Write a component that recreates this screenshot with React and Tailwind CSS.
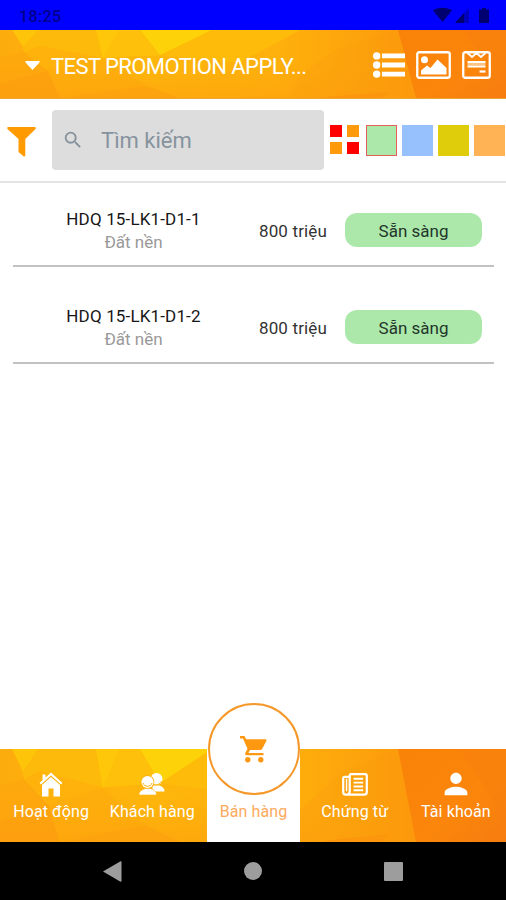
import React, { useState } from 'react';
import { MdSearch, MdPerson } from 'react-icons/md';

const products = [
  { id: 1, name: 'HDQ 15-LK1-D1-1', type: 'Đất nền', price: '800 triệu', status: 'Sẵn sàng' },
  { id: 2, name: 'HDQ 15-LK1-D1-2', type: 'Đất nền', price: '800 triệu', status: 'Sẵn sàng' }
];

const statusColors = [
  { id: 'ready', className: 'bg-[#abe8aa]' },
  { id: 'hold', className: 'bg-[#97c1fd]' },
  { id: 'booked', className: 'bg-[#dfcc0b]' },
  { id: 'deposit', className: 'bg-[#ffb355]' }
];

// Low-poly orange backdrop shared by the header and the tab bar
const PolyBackground = ({ id }) => (
  <svg className="absolute inset-0 h-full w-full" viewBox="0 0 506 92" preserveAspectRatio="none" aria-hidden="true">
    <defs>
      <linearGradient id={`${id}-base`} x1="0" y1="0" x2="1" y2="0">
        <stop offset="0" stopColor="#fdac0d" />
        <stop offset="0.3" stopColor="#feb60b" />
        <stop offset="0.55" stopColor="#feb00c" />
        <stop offset="0.7" stopColor="#fda40c" />
        <stop offset="0.8" stopColor="#fd9a0c" />
        <stop offset="1" stopColor="#fb8a0c" />
      </linearGradient>
      <linearGradient id={`${id}-right`} x1="0" y1="0" x2="1" y2="1">
        <stop offset="0" stopColor="#f98209" />
        <stop offset="0.6" stopColor="#fb860b" />
        <stop offset="1" stopColor="#f67c10" />
      </linearGradient>
      <linearGradient id={`${id}-shade`} x1="0" y1="0" x2="0" y2="1">
        <stop offset="0.5" stopColor="#fd9d0e" stopOpacity="0" />
        <stop offset="1" stopColor="#fd9d0e" stopOpacity="0.5" />
      </linearGradient>
    </defs>
    <rect width="506" height="92" fill={`url(#${id}-base)`} />
    <path d="M18 0H96L102 38L40 22L24 30Z" fill="#feba0b" />
    <path d="M12 0H38L23 22Z" fill="#fec40a" />
    <path d="M96 0H140L160 34L102 38Z" fill="#fec00a" />
    <path d="M96 0H119L103 38Z" fill="#fec709" />
    <path d="M140 0H212L160 34Z" fill="#fdd209" />
    <path d="M212 0H300L240 44L160 34Z" fill="#febb0a" />
    <path d="M0 36L24 30L48 55L0 72Z" fill="#fda80d" />
    <path d="M0 72L48 55L60 92H0Z" fill="#fda20e" />
    <path d="M24 30L40 22L102 38L48 55Z" fill="#feb20b" />
    <path d="M48 55L102 38L145 75L60 92Z" fill="#feaf0c" />
    <path d="M145 75L60 92H180Z" fill="#fda80d" />
    <rect width="400" height="92" fill={`url(#${id}-shade)`} />
    <path d="M300 60L340 24L396 0L416 92H290Z" fill="#fd9d0c" fillOpacity="0.25" />
    <path d="M340 89L390 84L382 92H320Z" fill="#fb960d" />
    <path d="M398 0H506V92H416Z" fill={`url(#${id}-right)`} />
    <path d="M506 0V70L460 0Z" fill="#f77d10" fillOpacity="0.4" />
  </svg>
);

const StatusBar = () => (
  <div className="flex h-[30px] shrink-0 items-center justify-between bg-[#0000ff] pl-[19px] pr-[16px] text-[#00008c]">
    <span className="pt-[3px] text-[16px] font-medium leading-none tracking-[0.4px]">18:25</span>
    <svg className="mt-px h-[17px] w-[57px]" viewBox="0 0 57 17" fill="#000070">
      <path d="M0 3.5C5.5-.2 13.500-.2 19 3.500L9.500 15Z" />
      <path d="M22 16L36 1V16Z" fillOpacity="0.45" />
      <path d="M22 16L31 6V16Z" />
      <path d="M46 2.500H49V1H53V2.500H56V16H46Z" />
    </svg>
  </div>
);

const ListIcon = () => (
  <svg className="h-[26px] w-[32px]" viewBox="0 0 32 26" fill="#fff">
    <circle cx="3.700" cy="3.900" r="3.700" />
    <circle cx="3.700" cy="13" r="3.700" />
    <circle cx="3.700" cy="22.100" r="3.700" />
    <path d="M9 1.500H32V6.300H9ZM9 10.600H32V15.400H9ZM9 19.700H32V24.500H9Z" />
  </svg>
);

const PictureIcon = () => (
  <svg className="h-[28px] w-[35px]" viewBox="0 0 35 28" fill="none">
    <rect x="1.250" y="1.250" width="32.500" height="25.500" rx="2" stroke="#fff" strokeWidth="2.300" />
    <circle cx="8.500" cy="8.700" r="3.500" fill="#fff" />
    <path d="M5 23.500V19.500L11 14.500L14.500 17L21.500 8.500L30.500 17V23.500Z" fill="#fff" />
  </svg>
);

const NoteIcon = () => (
  <svg className="h-[28px] w-[29px]" viewBox="0 0 29 28" fill="none" stroke="#fff">
    <rect x="1.250" y="1.250" width="26.500" height="25.500" rx="2" strokeWidth="2.300" />
    <path d="M5.500 2L10 6L14.500 2L19 6L23.500 2" strokeWidth="1.800" />
    <path d="M5.500 11H23.500M5.500 15.500H23.500" strokeWidth="2" />
    <path d="M5.500 13.200H23.500" strokeWidth="2.500" strokeOpacity="0.5" />
    <path d="M17.500 20.500H23.500" strokeWidth="2.200" />
  </svg>
);

const Header = () => (
  <header className="relative h-[69px] shrink-0 overflow-hidden border-b border-[#eda536]">
    <PolyBackground id="header" />
    <div className="relative flex h-full items-center pl-[25px] pr-[16px] pt-[2px] text-white">
      <svg className="h-[9px] w-[15px]" viewBox="0 0 15 9" fill="#fff">
        <path d="M1 0H14Q15.500 .5 14 2L7.500 9L1 2Q-.5 .5 1 0Z" />
      </svg>
      <h1 className="ml-[11px] mt-[2px] whitespace-nowrap text-[22px] tracking-[-0.57px]">TEST PROMOTION APPLY...</h1>
      <div className="-mr-px ml-auto flex items-center gap-[11px]">
        <ListIcon />
        <PictureIcon />
        <NoteIcon />
      </div>
    </div>
  </header>
);

const Toolbar = ({ selected, onSelect }) => (
  <div className="flex h-[84px] shrink-0 items-center border-b-2 border-[#e4e4e4] pl-[7px]">
    <svg className="mt-[3px] h-[30px] w-[29px] shrink-0" viewBox="0 0 29 30" fill="#ff9b00">
      <path d="M1 0H28Q29.500 .8 28.300 2.200L18.300 12V28.500Q18 30 16.500 29.200L11.500 25V12L.700 2.200Q-.5 .8 1 0Z" />
    </svg>
    <label className="ml-[16px] flex h-[60px] w-[272px] shrink-0 items-center rounded-[4px] bg-[#dddddd] pl-[10px]">
      <MdSearch className="h-[22px] w-[22px] shrink-0 text-[#86939e]" />
      <input
        className="ml-[17px] w-[200px] bg-transparent text-[22px] text-[#86939e] outline-none placeholder:text-[#86939e]"
        placeholder="Tìm kiếm"
      />
    </label>
    <div className="ml-[6px] mb-[2px] grid shrink-0 grid-cols-2 gap-[5px]">
      <span className="h-[12px] w-[12px] bg-[#ff0000]" />
      <span className="h-[12px] w-[12px] bg-[#ff9b0a]" />
      <span className="h-[12px] w-[12px] bg-[#ff9b0a]" />
      <span className="h-[12px] w-[12px] bg-[#ff0000]" />
    </div>
    <div className="ml-[7px] flex shrink-0 gap-[5px]">
      {statusColors.map((color) => (
        <button
          key={color.id}
          aria-label={color.id}
          onClick={() => onSelect(color.id)}
          className={`h-[31px] w-[31px] border ${color.className} ${selected === color.id ? 'border-[#e4605a]' : 'border-transparent'}`}
        />
      ))}
    </div>
  </div>
);

const ProductRow = ({ product }) => (
  <li className="flex h-[97px] items-center border-b-2 border-[#c2c2c2] pt-[25px]">
    <div className="w-[241px] pt-[2px] text-center">
      <p className="text-[17px] leading-[23px] tracking-[0.15px] text-[#161616]">{product.name}</p>
      <p className="text-[17px] leading-[23px] text-[#999999]">{product.type}</p>
    </div>
    <p className="w-[78px] whitespace-nowrap pt-[3px] text-center text-[17px] tracking-[0.15px] text-[#333333]">{product.price}</p>
    <span className="ml-[13px] flex h-[34px] w-[137px] items-center justify-center rounded-[12px] bg-[#abe8aa] pt-[3px] text-[17px] text-[#24352a]">
      {product.status}
    </span>
  </li>
);

const HomeIcon = () => (
  <svg className="h-[25px] w-[24px]" viewBox="0 0 24 25" fill="#fff">
    <path d="M12 .5L23.500 11L22 12.500L12 3.500L2 12.500L.5 11L3.500 8.200V2.500H6.500V5.500Z" />
    <path d="M12 5L21 13V24.500H14.500V16.500H9.500V24.500H3V13Z" />
  </svg>
);

const CustomersIcon = () => (
  <svg className="h-[24px] w-[26px]" viewBox="0 0 26 24" fill="#fff">
    <circle cx="17.500" cy="7" r="6" />
    <path d="M13.500 19.500V13.500H20.500C23.500 15 25.500 16 25.500 19.500Z" />
    <path d="M14.500 12.300C17.500 13.500 21 12.500 22.500 9" fill="none" stroke="#fdb10c" strokeWidth="0.900" />
    <circle cx="8.500" cy="10" r="6.900" fill="#fdb10c" />
    <path d="M0 23C0 18.500 3.500 18 6 16.500H11.500C14 18 17.500 18.500 17.500 23Z" stroke="#fdb10c" strokeWidth="0.600" />
    <circle cx="8.500" cy="10" r="6.100" />
    <path d="M4 11C5 15.300 12 15.300 13 11" fill="none" stroke="#fdb10c" strokeWidth="1" />
  </svg>
);

const CartIcon = () => (
  <svg className="h-[27px] w-[27px]" viewBox="0 0 27 27" fill="#ff9811">
    <path d="M0 0H4.500L6.200 3.300H25.500Q27 3.500 26.300 5L22.300 12.700Q21.700 14 20 14H10L8.400 17H23.500V19.300H6.500Q4.500 19 5.300 17L7.500 12.700L2.900 2.500H0Z" />
    <circle cx="7.800" cy="23.700" r="2.700" />
    <circle cx="20.800" cy="23.700" r="2.700" />
  </svg>
);

const NewsIcon = () => (
  <svg className="h-[23px] w-[26px]" viewBox="0 0 27 24" fill="none" stroke="#fff">
    <path d="M8 4V2.500Q8 1.200 9.500 1.200H24Q25.800 1.200 25.800 3V20Q25.800 22.500 23 22.500H4Q1.200 22.500 1.200 20V5.500Q1.200 4 3 4H8V19Q8 22.500 5 22.500" strokeWidth="2.300" />
    <path d="M4.700 6V19" strokeWidth="1.500" />
    <path d="M12 6H22M12 10H22M12 14H22M12 18H22" strokeWidth="2" />
  </svg>
);

const TabItem = ({ label, icon }) => (
  <button className="flex flex-1 flex-col items-center pl-px pt-[22px] text-white">
    <span className="flex h-[26px] items-center">{icon}</span>
    <span className="mt-[3px] whitespace-nowrap text-[16px] leading-[23px] tracking-[0.1px]">{label}</span>
  </button>
);

const TabBar = () => (
  <nav className="relative h-[93px] shrink-0">
    <PolyBackground id="tabs" />
    <div className="relative flex h-full">
      <TabItem label="Hoạt động" icon={<HomeIcon />} />
      <TabItem label="Khách hàng" icon={<CustomersIcon />} />
      <div className="flex flex-1 justify-center pl-px">
        <button className="relative flex w-[93px] flex-col items-center bg-white pt-[51px] text-[#fdaa5d]">
          <span className="absolute -top-[46px] flex h-[92px] w-[92px] items-center justify-center rounded-full border-2 border-[#f5982a] bg-white">
            <CartIcon />
          </span>
          <span className="whitespace-nowrap text-[16px] leading-[23px] tracking-[0.1px]">Bán hàng</span>
        </button>
      </div>
      <TabItem label="Chứng từ" icon={<NewsIcon />} />
      <TabItem label="Tài khoản" icon={<MdPerson className="h-[34px] w-[34px]" />} />
    </div>
  </nav>
);

const SystemNav = () => (
  <div className="flex h-[58px] shrink-0 items-center justify-between bg-black pl-[103px] pr-[103px]">
    <svg className="h-[21px] w-[19px]" viewBox="0 0 19 21" fill="#9d9d9d">
      <path d="M0 10.500L17.500 .300Q18.500 0 18.500 1V20Q18.500 21 17.500 20.700Z" />
    </svg>
    <span className="h-[18px] w-[18px] rounded-full bg-[#9d9d9d]" />
    <span className="h-[19px] w-[19px] rounded-[1px] bg-[#9d9d9d]" />
  </div>
);

const App = () => {
  const [selected, setSelected] = useState('ready');

  return (
    <div className="flex h-[900px] w-[506px] flex-col overflow-hidden bg-white font-['Roboto',sans-serif]">
      <StatusBar />
      <Header />
      <Toolbar selected={selected} onSelect={setSelected} />
      <ul className="-mt-[13px] flex-1 pl-[13px] pr-[12px]">
        {products.map((product) => (
          <ProductRow key={product.id} product={product} />
        ))}
      </ul>
      <TabBar />
      <SystemNav />
    </div>
  );
};

export default App;
